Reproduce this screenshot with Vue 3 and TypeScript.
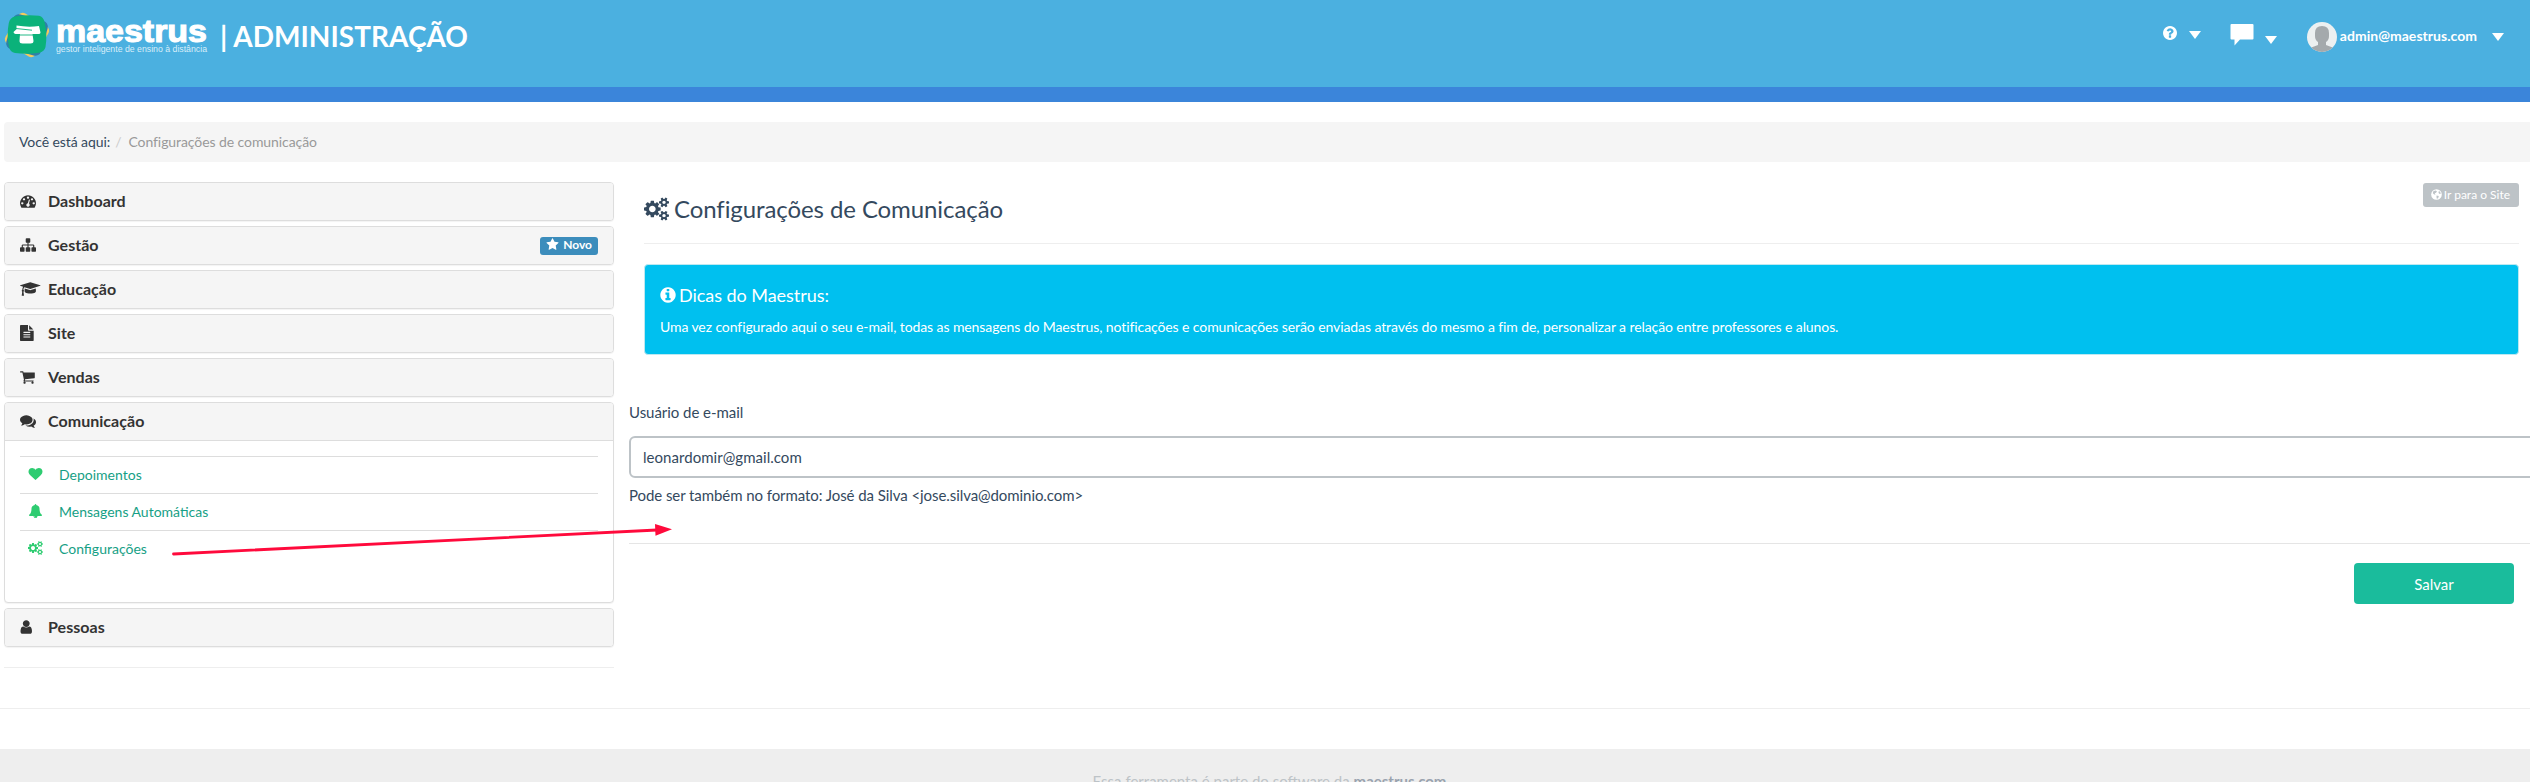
<script setup lang="ts">
interface Glyph { box: string; d: string }

const glyphs: Record<string, Glyph> = {
  dashboard: { box: '0 0 1792 1792', d: 'M384 1152q0-53-37.5-90.5t-90.5-37.5-90.5 37.5-37.5 90.5 37.5 90.5 90.5 37.5 90.5-37.5 37.5-90.5zm192-448q0-53-37.5-90.5t-90.5-37.5-90.5 37.5-37.5 90.5 37.5 90.5 90.5 37.5 90.5-37.5 37.5-90.5zm428 481l101-382q6-26-7.5-48.5t-38.5-29.5-48 6.5-30 39.5l-101 382q-60 5-107 43.5t-63 98.5q-20 77 20 146t117 89 146-20 89-117q16-60-6-117t-72-91zm660-33q0-53-37.5-90.5t-90.5-37.5-90.5 37.5-37.5 90.5 37.5 90.5 90.5 37.5 90.5-37.5 37.5-90.5zm-640-640q0-53-37.5-90.5t-90.5-37.5-90.5 37.5-37.5 90.5 37.5 90.5 90.5 37.5 90.5-37.5 37.5-90.5zm448 192q0-53-37.5-90.5t-90.5-37.5-90.5 37.5-37.5 90.5 37.5 90.5 90.5 37.5 90.5-37.5 37.5-90.5zm320 448q0 261-141 483-19 29-54 29h-1402q-35 0-54-29-141-221-141-483 0-182 71-348t191-286 286-191 348-71 348 71 286 191 191 286 71 348z' },
  sitemap: { box: '0 0 1792 1792', d: 'M1792 1248v320q0 40-28 68t-68 28h-320q-40 0-68-28t-28-68v-320q0-40 28-68t68-28h96v-192h-512v192h96q40 0 68 28t28 68v320q0 40-28 68t-68 28h-320q-40 0-68-28t-28-68v-320q0-40 28-68t68-28h96v-192h-512v192h96q40 0 68 28t28 68v320q0 40-28 68t-68 28h-320q-40 0-68-28t-28-68v-320q0-40 28-68t68-28h96v-192q0-52 38-90t90-38h512v-192h-96q-40 0-68-28t-28-68v-320q0-40 28-68t68-28h320q40 0 68 28t28 68v320q0 40-28 68t-68 28h-96v192h512q52 0 90 38t38 90v192h96q40 0 68 28t28 68z' },
  cap: { box: '0 0 2304 1792', d: 'M1774 836l18 316q4 69-82 128t-235 93.5-323 34.5-323-34.5-235-93.5-82-128l18-316 574 181q22 7 48 7t48-7zm530-324q0 23-22 31l-1120 352q-4 1-10 1t-10-1l-652-206q-43 34-71 111.5t-34 178.5q63 36 63 109 0 69-58 107l58 433q2 14-8 25-9 11-24 11h-192q-15 0-24-11-10-11-8-25l58-433q-58-38-58-107 0-73 65-111 11-207 98-330l-333-104q-22-8-22-31t22-31l1120-352q4-1 10-1t10 1l1120 352q22 8 22 31z' },
  file: { box: '128 0 1536 1792', d: 'M1596 476q14 14 28 36h-472v-472q22 14 36 28zm-476 164h544v1056q0 40-28 68t-68 28h-1344q-40 0-68-28t-28-68v-1600q0-40 28-68t68-28h800v544q0 40 28 68t68 28zm160 736v-64q0-14-9-23t-23-9h-704q-14 0-23 9t-9 23v64q0 14 9 23t23 9h704q14 0 23-9t9-23zm0-256v-64q0-14-9-23t-23-9h-704q-14 0-23 9t-9 23v64q0 14 9 23t23 9h704q14 0 23-9t9-23zm0-256v-64q0-14-9-23t-23-9h-704q-14 0-23 9t-9 23v64q0 14 9 23t23 9h704q14 0 23-9t9-23z' },
  cart: { box: '64 0 1664 1792', d: 'M704 1536q0 52-38 90t-90 38-90-38-38-90 38-90 90-38 90 38 38 90zm896 0q0 52-38 90t-90 38-90-38-38-90 38-90 90-38 90 38 38 90zm128-1088v512q0 24-16.5 42.5t-40.5 21.5l-1044 122q13 60 13 70 0 16-24 64h920q26 0 45 19t19 45-19 45-45 19h-1024q-26 0-45-19t-19-45q0-11 8-31.5t16-36 21.5-40 15.5-29.5l-177-823h-204q-26 0-45-19t-19-45 19-45 45-19h256q16 0 28.5 6.5t19.5 15.5 13 24.5 8 26 5.5 29.5 4.5 26h1201q26 0 45 19t19 45z' },
  comments: { box: '0 0 1792 1792', d: 'M1408 768q0 139-94 257t-256.5 186.5-353.5 68.5q-86 0-176-16-124 88-278 128-36 9-86 16h-3q-11 0-20.5-8t-11.5-21q-1-3-1-6.5t.5-6.5 2-6l2.5-5 3.5-5.5 4-5 4.5-5 4-4.5q5-6 23-25t26-29.5 22.5-29 25-38.5 20.5-44q-124-72-195-177t-71-224q0-139 94-257t256.5-186.5 353.5-68.5 353.5 68.5 256.5 186.5 94 257zm384 256q0 120-71 224.5t-195 176.5q10 24 20.5 44t25 38.5 22.5 29 26 29.5 23 25q1 1 4 4.5t4.5 5 4 5 3.5 5.5l2.5 5 2 6 .5 6.5-1 6.5q-3 14-13 22t-22 7q-50-7-86-16-154-40-278-128-90 16-176 16-271 0-472-132 58 4 88 4 161 0 309-45t264-129q125-92 192-212t67-254q0-77-23-152 129 71 204 178t75 230z' },
  user: { box: '256 0 1280 1792', d: 'M1536 1399q0 109-62.5 187t-150.5 78h-854q-88 0-150.5-78t-62.5-187q0-85 8.5-160.5t31.5-152 58.5-131 94-89 134.5-34.5q131 128 313 128t313-128q76 0 134.5 34.5t94 89 58.5 131 31.5 152 8.5 160.5zm-256-887q0 159-112.5 271.5t-271.5 112.5-271.5-112.5-112.5-271.5 112.5-271.5 271.5-112.5 271.5 112.5 112.5 271.5z' },
  heart: { box: '0 0 1792 1792', d: 'M896 1664q-26 0-44-18l-624-602q-10-8-27.5-26t-55.5-65.5-68-97.5-53.5-121-23.5-138q0-220 127-344t351-124q62 0 126.5 21.5t120 58 95.5 68.5 76 68q36-36 76-68t95.5-68.5 120-58 126.5-21.5q224 0 351 124t127 344q0 221-229 450l-623 600q-18 18-44 18z' },
  bell: { box: '0 0 1792 1792', d: 'M912 1696q0-16-16-16-59 0-101.5-42.5t-42.5-101.5q0-16-16-16t-16 16q0 73 51.5 124.5t124.5 51.5q16 0 16-16zm816-288q0 52-38 90t-90 38h-448q0 106-75 181t-181 75-181-75-75-181h-448q-52 0-90-38t-38-90q50-42 91-88t85-119.5 74.5-158.5 50-206 19.5-260q0-152 117-282.5t307-158.5q-8-19-8-39 0-40 28-68t68-28 68 28 28 68q0 20-8 39 190 28 307 158.5t117 282.5q0 139 19.5 260t50 206 74.5 158.5 85 119.5 91 88z' },
  star: { box: '0 0 1792 1792', d: 'M1728 647q0 22-26 48l-363 354 86 500q1 7 1 20 0 21-10.5 35.5t-30.5 14.5q-19 0-40-12l-449-236-449 236q-22 12-40 12-21 0-31.5-14.5t-10.5-35.5q0-6 2-20l86-500-364-354q-25-27-25-48 0-37 56-46l502-73 225-455q19-41 49-41t49 41l225 455 502 73q56 9 56 46z' },
  info: { box: '128 0 1536 1792', d: 'M1152 1376v-160q0-14-9-23t-23-9h-96v-512q0-14-9-23t-23-9h-320q-14 0-23 9t-9 23v160q0 14 9 23t23 9h96v320h-96q-14 0-23 9t-9 23v160q0 14 9 23t23 9h448q14 0 23-9t9-23zm-128-896v-160q0-14-9-23t-23-9h-192q-14 0-23 9t-9 23v160q0 14 9 23t23 9h192q14 0 23-9t9-23zm640 416q0 209-103 385.5t-279.5 279.5-385.5 103-385.5-103-279.5-279.5-103-385.5 103-385.5 279.5-279.5 385.5-103 385.5 103 279.5 279.5 103 385.5z' },
  question: { box: '128 128 1536 1536', d: 'M1024 1376v-192q0-14-9-23t-23-9h-192q-14 0-23 9t-9 23v192q0 14 9 23t23 9h192q14 0 23-9t9-23zm256-672q0-88-55.5-163t-138.5-116-170-41q-243 0-371 213-15 24 8 42l132 100q7 6 19 6 16 0 25-12 53-68 86-92 34-24 86-24 48 0 85.5 26t37.5 59q0 38-20 61t-68 45q-63 28-115.5 86.5t-52.5 125.5v36q0 14 9 23t23 9h192q14 0 23-9t9-23q0-19 21.5-49.5t54.5-49.5q32-18 49-28.5t46-35 44.5-48 28-60.5 12.5-81zm384 192q0 209-103 385.5t-279.5 279.5-385.5 103-385.5-103-279.5-279.5-103-385.5 103-385.5 279.5-279.5 385.5-103 385.5 103 279.5 279.5 103 385.5z' },
  cogs: { box: '0 0 1920 1792', d: 'M896 896q0-106-75-181t-181-75-181 75-75 181 75 181 181 75 181-75 75-181zm768 512q0-52-38-90t-90-38-90 38-38 90q0 53 37.5 90.5t90.5 37.5 90.5-37.5 37.5-90.5zm0-1024q0-52-38-90t-90-38-90 38-38 90q0 53 37.5 90.5t90.5 37.5 90.5-37.5 37.5-90.5zm-384 421v185q0 10-7 19.5t-16 10.5l-155 24q-11 35-32 76 34 48 90 115 7 11 7 20 0 12-7 19-23 30-82.5 89.5t-78.5 59.5q-11 0-21-7l-115-90q-37 19-77 31-11 108-23 155-7 24-30 24h-186q-11 0-20-7.5t-10-17.5l-23-153q-34-10-75-31l-118 89q-7 7-20 7-11 0-21-8-144-133-144-160 0-9 7-19 10-14 41-53t47-61q-23-44-35-82l-152-24q-10-1-17-9.5t-7-19.5v-185q0-10 7-19.5t16-10.5l155-24q11-35 32-76-34-48-90-115-7-11-7-20 0-12 7-20 22-30 82-89t79-59q11 0 21 7l115 90q34-18 77-32 11-108 23-154 7-24 30-24h186q11 0 20 7.5t10 17.5l23 153q34 10 75 31l118-89q8-7 20-7 11 0 21 8 144 133 144 160 0 8-7 19-12 16-42 54t-45 60q23 48 34 82l152 23q10 2 17 10.5t7 19.5zm640 533v140q0 16-149 31-12 27-30 52 51 113 51 138 0 4-4 7-122 71-124 71-8 0-46-47t-52-68q-20 2-30 2t-30-2q-14 21-52 68t-46 47q-2 0-124-71-4-3-4-7 0-25 51-138-18-25-30-52-149-15-149-31v-140q0-16 149-31 13-29 30-52-51-113-51-138 0-4 4-7 4-2 35-20t59-34 30-16q8 0 46 46.5t52 67.5q20-2 30-2t30 2q51-71 92-112l6-2q4 0 124 70 4 3 4 7 0 25-51 138 17 23 30 52 149 15 149 31zm0-1024v140q0 16-149 31-12 27-30 52 51 113 51 138 0 4-4 7-122 71-124 71-8 0-46-47t-52-68q-20 2-30 2t-30-2q-14 21-52 68t-46 47q-2 0-124-71-4-3-4-7 0-25 51-138-18-25-30-52-149-15-149-31v-140q0-16 149-31 13-29 30-52-51-113-51-138 0-4 4-7 4-2 35-20t59-34 30-16q8 0 46 46.5t52 67.5q20-2 30-2t30 2q51-71 92-112l6-2q4 0 124 70 4 3 4 7 0 25-51 138 17 23 30 52 149 15 149 31z' }
}

interface Entry { label: string; icon: string; w: number; badge?: string; children?: { label: string; icon: string }[] }
const menu: Entry[] = [
  { label: 'Dashboard', icon: 'dashboard', w: 16 },
  { label: 'Gestão', icon: 'sitemap', w: 16, badge: 'Novo' },
  { label: 'Educação', icon: 'cap', w: 20.5 },
  { label: 'Site', icon: 'file', w: 13.7 },
  { label: 'Vendas', icon: 'cart', w: 14.8 },
  {
    label: 'Comunicação', icon: 'comments', w: 16,
    children: [
      { label: 'Depoimentos', icon: 'heart' },
      { label: 'Mensagens Automáticas', icon: 'bell' },
      { label: 'Configurações', icon: 'cogs' }
    ]
  },
  { label: 'Pessoas', icon: 'user', w: 12.5 }
]
</script>

<template>
  <div class="page">
    <header class="top">
      <div class="brand">
        <svg class="mark" viewBox="0 0 46 46" width="46" height="46">
          <rect x="5.500" y="5.500" width="35" height="35" rx="5" fill="#f5cb5c" transform="rotate(31 23 23)" />
          <rect x="5" y="5" width="36" height="36" rx="6" fill="#2f7fa8" transform="rotate(16 23 23)" />
          <path d="M11 4.500Q23 2.500 35 3.800Q39.500 4.500 40.800 11Q43.500 23 41.500 35Q40.500 39.500 35 40.800Q23 42.500 11 41Q6 40 5 35Q2.500 23 4.800 11Q6 5.500 11 4.500Z" fill="#0bb27a" />
          <path d="M12.500 13.500Q24 15.500 35 14L36.500 20.500Q36.500 22 34.500 22H28.500L29.500 29Q29.500 31.500 26.500 31.500H18.500Q15.500 31.500 15.500 29L16 22H11.500Q9.500 21.500 9.500 20L12.500 17.200Z" fill="#fff" />
          <path d="M12 16.500L28 18.200M15.500 23H29.500" stroke="#0bb27a" stroke-width=".9" fill="none" />
        </svg>
        <svg class="word" width="156" height="46" viewBox="0 0 156 46">
          <text class="name" x="2" y="29.500" textLength="151" lengthAdjust="spacingAndGlyphs">maestrus</text>
          <text class="tag" x="2" y="39.500" textLength="151" lengthAdjust="spacingAndGlyphs">gestor inteligente de ensino à distância</text>
        </svg>
        <h1>| ADMINISTRAÇÃO</h1>
      </div>
      <nav class="tools">
        <svg class="help" :viewBox="glyphs.question.box"><path :d="glyphs.question.d" fill="#fff" /></svg>
        <i class="caret c1"></i>
        <svg class="chat" viewBox="0 0 24 22"><path d="M1.500 0H22.500Q23.500 0 23.500 1V14.500Q23.500 15.500 22.500 15.500H10L4.500 21.500V15.500H1.500Q.5 15.500 .5 14.500V1Q.5 0 1.500 0Z" fill="#fff" /></svg>
        <i class="caret c2"></i>
        <svg class="avatar" viewBox="0 0 30 30">
          <clipPath id="face"><circle cx="15" cy="15" r="15" /></clipPath>
          <g clip-path="url(#face)">
            <rect width="30" height="30" fill="#ecf0f1" />
            <path d="M15 4Q22 4 22 11V14Q22 18 19 20V23Q23 24.500 27 26V30H3V26Q7 24.500 11 23V20Q8 18 8 14V11Q8 4 15 4Z" fill="#a4a9ac" />
          </g>
        </svg>
        <span class="mail">admin@maestrus.com</span>
        <i class="caret c3"></i>
      </nav>
    </header>

    <div class="crumbs"><span>Você está aqui:</span><span class="slash">/</span><span class="here">Configurações de comunicação</span></div>

    <div class="columns">
      <aside>
        <section v-for="m in menu" :key="m.label" class="panel">
          <div class="head" :class="{ open: m.children }">
            <span class="ico"><svg :viewBox="glyphs[m.icon].box" :style="{ width: m.w + 'px' }"><path :d="glyphs[m.icon].d" fill="#333" /></svg></span>
            <span class="label">{{ m.label }}</span>
            <span v-if="m.badge" class="badge"><svg :viewBox="glyphs.star.box"><path :d="glyphs.star.d" fill="#fff" /></svg>{{ m.badge }}</span>
          </div>
          <ul v-if="m.children">
            <li v-for="c in m.children" :key="c.label">
              <svg :viewBox="glyphs[c.icon].box"><path :d="glyphs[c.icon].d" fill="#2ecc71" /></svg>
              <a>{{ c.label }}</a>
            </li>
          </ul>
        </section>
        <hr class="sidehr">
      </aside>

      <main>
        <div class="inner">
          <div class="titlebar">
            <svg class="tcog" :viewBox="glyphs.cogs.box"><path :d="glyphs.cogs.d" fill="#34495e" /></svg>
            <h2>Configurações de Comunicação</h2>
            <a class="site">
              <svg viewBox="0 0 12 12"><circle cx="6" cy="6" r="5.800" fill="#fff" /><path d="M2.500 2.500L5 1.500L6.500 2.500L5.500 4L4 4.500L5 6L3.500 6L2 4.500ZM8 3L9.500 2.500L10.800 5L9.500 5.500L8.500 4.500ZM6 7L8.500 7.500L8 9.500L6.500 10.800L6 9Z" fill="#bdc3c7" /></svg>Ir para o Site
            </a>
          </div>
          <div class="alert">
            <h4><svg :viewBox="glyphs.info.box"><path :d="glyphs.info.d" fill="#fff" /></svg><span>Dicas do Maestrus:</span></h4>
            <p>Uma vez configurado aqui o seu e-mail, todas as mensagens do Maestrus, notificações e comunicações serão enviadas através do mesmo a fim de, personalizar a relação entre professores e alunos.</p>
          </div>
        </div>
        <form @submit.prevent>
          <label>Usuário de e-mail</label>
          <div class="field">leonardomir@gmail.com</div>
          <p class="hint">Pode ser também no formato: José da Silva &lt;jose.silva@dominio.com&gt;</p>
          <button type="submit">Salvar</button>
        </form>
      </main>
    </div>

    <hr class="endhr">
    <footer><span>Essa ferramenta é parte do software da <b>maestrus.com</b></span></footer>

    <svg class="arrow" width="503" height="36" viewBox="0 0 503 36">
      <path d="M4.500 30L488 6" stroke="#ff0a3c" stroke-width="2.800" stroke-linecap="round" />
      <path d="M486 0L503 5.200L486.500 11.700Z" fill="#ff0a3c" />
    </svg>
  </div>
</template>

<style>
html, body { margin: 0; overflow: hidden; background: #fff; }
</style>

<style scoped>
* { box-sizing: border-box; }
.page { position: relative; width: 100%; height: 782px; overflow: hidden; display: flex; flex-direction: column; font-family: Lato, "Liberation Sans", sans-serif; font-size: 15px; color: #34495e; white-space: nowrap; }
.top { height: 102px; flex: none; background: #4bb0e0; border-bottom: 15px solid #3b85da; display: flex; justify-content: space-between; align-items: flex-start; }
.brand { display: flex; padding: 12px 0 0 4px; }
.mark, .word { display: block; flex: none; overflow: visible; }
.word { margin-left: 4px; }
.name { font: 700 32px "Liberation Sans", sans-serif; fill: #fff; stroke: #fff; stroke-width: 1.1px; }
.tag { font: 400 9px "Liberation Sans", sans-serif; fill: #d8eef9; }
h1 { margin: 6px 0 0 10px; font-size: 28px; line-height: 36px; font-weight: 700; color: #fff; letter-spacing: .03px; }
.tools { display: flex; align-items: flex-start; padding-right: 26px; }
.tools svg { display: block; flex: none; }
.caret { width: 0; height: 0; border: 6px solid transparent; border-top: 8px solid #fff; border-bottom: 0; }
.help { width: 14px; height: 14px; margin-top: 26px; }
.c1 { margin: 31px 0 0 12px; }
.chat { width: 24px; height: 22px; margin: 24px 0 0 29px; }
.c2 { margin: 36px 0 0 11px; }
.avatar { width: 30px; height: 30px; margin: 22px 0 0 30px; }
.mail { margin: 26px 0 0 3px; font-size: 14px; line-height: 20px; font-weight: 700; color: #fff; letter-spacing: .03px; }
.c3 { margin: 33px 0 0 15px; }

.crumbs { height: 40px; flex: none; margin: 20px 0 20px 4px; padding-left: 15px; border-radius: 4px 0 0 4px; background: #f5f5f5; display: flex; font-size: 14px; line-height: 40px; letter-spacing: -.08px; }
.slash { color: #ccc; margin: 0 7px 0 5px; }
.here { color: #999; }

.columns { height: 526px; flex: none; display: flex; }
aside { width: 610px; margin-left: 4px; flex: none; display: flex; flex-direction: column; gap: 5px; }
.panel { border: 1px solid #ddd; border-radius: 4px; box-shadow: 0 1px 1px rgba(0,0,0,.05); overflow: hidden; flex: none; background: #fff; }
.head { height: 37px; background: #f5f5f5; display: flex; align-items: center; padding: 0 15px 2px; color: #333; }
.head.open { height: 38px; border-bottom: 1px solid #ddd; }
.ico { width: 28px; display: flex; flex: none; }
.ico svg { height: 16px; display: block; }
.label { font-size: 16px; line-height: 20px; font-weight: 700; flex: 1; letter-spacing: .04px; }
.badge { display: flex; align-items: flex-start; height: 18px; padding: 0 6px; border-radius: 3px; background: #3c8dbc; color: #fff; font-size: 12px; font-weight: 700; line-height: 16px; margin-top: 2px; }
.badge svg { width: 13px; height: 13px; margin: 1px 4px 0 0; }
ul { list-style: none; margin: 0; padding: 15px 15px 35px; }
li { height: 37px; border-top: 1px solid #ddd; display: flex; align-items: center; color: #16a085; font-size: 14px; }
li svg { width: 15px; height: 14px; margin: 0 16px 2px 8px; display: block; flex: none; }
li a { margin-top: -1px; }
hr { border: 0; border-top: 1px solid #eee; margin: 0; flex: none; }
.sidehr { margin-top: 15px; }

main { flex: 1; min-width: 0; margin-left: 15px; }
.inner { margin: 0 11px 0 15px; }
.titlebar { display: flex; align-items: flex-start; height: 62px; border-bottom: 1px solid #eee; }
.tcog { width: 25px; height: 24px; margin: 15px 5px 0 0; }
h2 { margin: 11px 0 0; font-size: 24px; line-height: 32px; font-weight: 400; flex: 1; letter-spacing: -.09px; }
.site { display: flex; align-items: center; margin-top: 1px; height: 24px; padding: 0 9px 1px 8px; border-radius: 3px; background: #bdc3c7; color: #fff; font-size: 12px; }
.site svg { width: 11px; height: 11px; margin-right: 2px; }
.alert { height: 91px; margin-top: 20px; border: 1px solid #bce8f1; border-radius: 4px; background: #00c0ef; color: #fff; padding: 19px 15px; }
h4 { margin: 0; display: flex; align-items: center; font-size: 18px; font-weight: 400; line-height: 22px; letter-spacing: -.04px; }
h4 svg { width: 16px; height: 18px; margin-right: 3px; }
.alert p { margin: 11px 0 0; font-size: 14px; line-height: 20px; letter-spacing: -.093px; }
form { margin-top: 47px; display: flex; flex-direction: column; }
label { line-height: 20px; height: 34px; letter-spacing: -.04px; }
.field { height: 42px; margin-right: -5px; border: 2px solid #bdc3c7; border-radius: 6px; padding: 0 12px; line-height: 38px; letter-spacing: .04px; }
.hint { margin: 0; height: 66px; padding-top: 7px; line-height: 20px; border-bottom: 1px solid #e5e5e5; letter-spacing: -.07px; }
button { align-self: flex-end; width: 160px; height: 41px; margin: 19px 16px 0 0; border: 0; border-radius: 4px; background: #1abc9c; color: #fff; font: 400 15px Lato, "Liberation Sans", sans-serif; }
footer { margin-top: 40px; flex: none; height: 80px; background: #eee; text-align: center; padding: 21px 0 0 9px; line-height: 22px; color: #bdc3c7; }
footer b { color: #9aa3ae; }
.arrow { position: absolute; left: 169px; top: 524px; fill: none; }
</style>
